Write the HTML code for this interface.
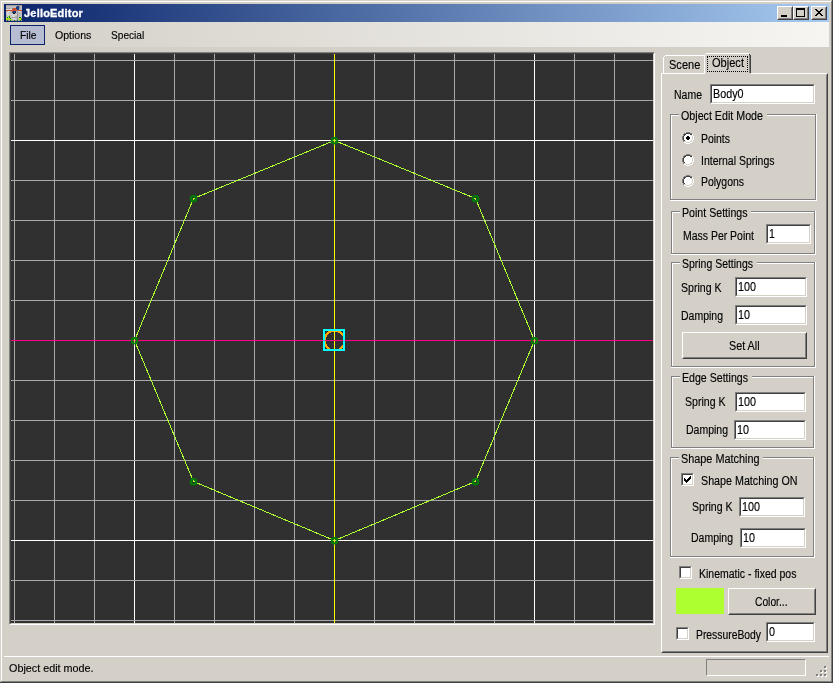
<!DOCTYPE html>
<html><head><meta charset="utf-8"><title>JelloEditor</title>
<style>
html,body{margin:0;padding:0}
body{width:833px;height:683px;position:relative;overflow:hidden;background:#D4D0C8;font-family:"Liberation Sans",sans-serif;color:#000}
body div,body span,body svg{position:absolute;box-sizing:content-box}
.ms{font-size:12px;line-height:13px;white-space:nowrap;transform-origin:0 0;filter:grayscale(1);-webkit-text-stroke:0.15px #000}
.th{font-size:11px;line-height:13px;white-space:nowrap;transform-origin:0 0;filter:grayscale(1);-webkit-text-stroke:0.15px #000}
.tb{border:1px solid;border-color:#808080 #fff #fff #808080;background:#fff}
.tb>div{left:0;top:0;right:0;bottom:0;border:1px solid;border-color:#404040 #D4D0C8 #D4D0C8 #404040}
.btn{border:1px solid;border-color:#fff #404040 #404040 #fff;background:#D4D0C8}
.btn>div{left:0;top:0;right:0;bottom:0;border:1px solid;border-color:#D4D0C8 #808080 #808080 #D4D0C8}
</style></head><body>

<div style="left:0px;top:0px;width:833px;height:683px;background:#D4D0C8"></div>
<div style="left:1px;top:1px;width:830px;height:1px;background:#fff"></div>
<div style="left:1px;top:1px;width:1px;height:680px;background:#fff"></div>
<div style="left:831px;top:0px;width:1px;height:683px;background:#808080"></div>
<div style="left:0px;top:681px;width:832px;height:1px;background:#808080"></div>
<div style="left:832px;top:0px;width:1px;height:683px;background:#404040"></div>
<div style="left:0px;top:682px;width:833px;height:1px;background:#404040"></div>
<div style="left:831px;top:0px;width:1px;height:1px;background:#D4D0C8"></div>
<div style="left:0px;top:681px;width:1px;height:1px;background:#D4D0C8"></div>
<div style="left:4px;top:4px;width:825px;height:18px;background:linear-gradient(to right,#0A246A,#A6CAF0)"></div>
<svg style="left:6px;top:5px" width="16" height="16" viewBox="0 0 16 16" shape-rendering="crispEdges"><rect width="16" height="16" fill="#BCBCBC"/><rect x="0" y="0" width="11" height="1" fill="#A0A0A0"/><rect x="11" y="0" width="1" height="1" fill="#909090"/><rect x="12" y="0" width="1" height="1" fill="#A0A0A0"/><rect x="13" y="0" width="2" height="1" fill="#909090"/><rect x="15" y="0" width="1" height="1" fill="#A0A0A0"/><rect x="10" y="1" width="1" height="1" fill="#909090"/><rect x="11" y="1" width="2" height="1" fill="#1C3C8C"/><rect x="13" y="1" width="1" height="1" fill="#909090"/><rect x="10" y="2" width="3" height="1" fill="#1C3C8C"/><rect x="13" y="2" width="1" height="1" fill="#909090"/><rect x="0" y="3" width="4" height="1" fill="#A0A0A0"/><rect x="6" y="3" width="1" height="1" fill="#909090"/><rect x="7" y="3" width="3" height="1" fill="#C8502C"/><rect x="10" y="3" width="3" height="1" fill="#1C3C8C"/><rect x="13" y="3" width="1" height="1" fill="#909090"/><rect x="0" y="4" width="6" height="1" fill="#DCDCDC"/><rect x="6" y="4" width="5" height="1" fill="#C8502C"/><rect x="11" y="4" width="2" height="1" fill="#1C3C8C"/><rect x="0" y="5" width="11" height="1" fill="#C8502C"/><rect x="11" y="5" width="1" height="1" fill="#909090"/><rect x="12" y="5" width="4" height="1" fill="#C8502C"/><rect x="2" y="6" width="2" height="1" fill="#DCDCDC"/><rect x="6" y="6" width="1" height="1" fill="#C8502C"/><rect x="7" y="6" width="3" height="1" fill="#1C3C8C"/><rect x="11" y="6" width="1" height="1" fill="#909090"/><rect x="12" y="6" width="2" height="1" fill="#DCDCDC"/><rect x="1" y="7" width="2" height="1" fill="#DCDCDC"/><rect x="6" y="7" width="3" height="1" fill="#1C3C8C"/><rect x="9" y="7" width="1" height="1" fill="#101010"/><rect x="11" y="7" width="1" height="1" fill="#909090"/><rect x="1" y="8" width="1" height="1" fill="#DCDCDC"/><rect x="3" y="8" width="1" height="1" fill="#DCDCDC"/><rect x="6" y="8" width="1" height="1" fill="#DCDCDC"/><rect x="7" y="8" width="2" height="1" fill="#101010"/><rect x="11" y="8" width="1" height="1" fill="#909090"/><rect x="13" y="8" width="1" height="1" fill="#A0A0A0"/><rect x="1" y="9" width="2" height="1" fill="#DCDCDC"/><rect x="4" y="9" width="2" height="1" fill="#DCDCDC"/><rect x="7" y="9" width="2" height="1" fill="#DCDCDC"/><rect x="10" y="9" width="1" height="1" fill="#DCDCDC"/><rect x="11" y="9" width="1" height="1" fill="#909090"/><rect x="2" y="10" width="1" height="1" fill="#DCDCDC"/><rect x="6" y="10" width="2" height="1" fill="#DCDCDC"/><rect x="9" y="10" width="1" height="1" fill="#DCDCDC"/><rect x="11" y="10" width="1" height="1" fill="#909090"/><rect x="2" y="11" width="1" height="1" fill="#A0F020"/><rect x="3" y="11" width="1" height="1" fill="#20A010"/><rect x="5" y="11" width="1" height="1" fill="#DCDCDC"/><rect x="7" y="11" width="2" height="1" fill="#DCDCDC"/><rect x="11" y="11" width="1" height="1" fill="#909090"/><rect x="1" y="12" width="1" height="1" fill="#108010"/><rect x="3" y="12" width="1" height="1" fill="#108010"/><rect x="6" y="12" width="5" height="1" fill="#A0A0A0"/><rect x="11" y="12" width="1" height="1" fill="#909090"/><rect x="13" y="12" width="2" height="1" fill="#108010"/><rect x="0" y="13" width="4" height="1" fill="#A0F020"/><rect x="4" y="13" width="1" height="1" fill="#108010"/><rect x="7" y="13" width="2" height="1" fill="#DCDCDC"/><rect x="11" y="13" width="1" height="1" fill="#909090"/><rect x="13" y="13" width="2" height="1" fill="#A0F020"/><rect x="15" y="13" width="1" height="1" fill="#C8502C"/><rect x="0" y="14" width="1" height="1" fill="#A0F020"/><rect x="1" y="14" width="1" height="1" fill="#F0A010"/><rect x="2" y="14" width="1" height="1" fill="#A0F020"/><rect x="3" y="14" width="1" height="1" fill="#F0A010"/><rect x="4" y="14" width="2" height="1" fill="#A0F020"/><rect x="7" y="14" width="1" height="1" fill="#DCDCDC"/><rect x="9" y="14" width="1" height="1" fill="#DCDCDC"/><rect x="11" y="14" width="1" height="1" fill="#909090"/><rect x="13" y="14" width="2" height="1" fill="#A0F020"/><rect x="15" y="14" width="1" height="1" fill="#20A010"/><rect x="0" y="15" width="1" height="1" fill="#A0A0A0"/><rect x="1" y="15" width="1" height="1" fill="#108010"/><rect x="2" y="15" width="2" height="1" fill="#A0A0A0"/><rect x="4" y="15" width="1" height="1" fill="#108010"/><rect x="5" y="15" width="3" height="1" fill="#A0A0A0"/><rect x="8" y="15" width="1" height="1" fill="#108010"/><rect x="9" y="15" width="2" height="1" fill="#A0A0A0"/><rect x="11" y="15" width="1" height="1" fill="#108010"/><rect x="12" y="15" width="2" height="1" fill="#A0A0A0"/><rect x="14" y="15" width="1" height="1" fill="#108010"/><rect x="15" y="15" width="1" height="1" fill="#A0A0A0"/></svg>
<span class="th" style="left:24px;top:7px;font-weight:bold;color:#fff;letter-spacing:0.2px;-webkit-text-stroke:0.3px #fff">JelloEditor</span>
<div class="btn" style="left:777px;top:6px;width:14px;height:12px"><div></div></div>
<svg style="left:777px;top:6px" width="16" height="14" viewBox="0 0 16 14" shape-rendering="crispEdges"><rect x="4" y="9" width="6" height="2" fill="#000"/></svg>
<div class="btn" style="left:793px;top:6px;width:14px;height:12px"><div></div></div>
<svg style="left:793px;top:6px" width="16" height="14" viewBox="0 0 16 14" shape-rendering="crispEdges"><rect x="3" y="2" width="8" height="8" fill="none" stroke="#000" stroke-width="1" transform="translate(0.5,0.5)"/><rect x="3" y="2" width="9" height="2" fill="#000"/></svg>
<div class="btn" style="left:811px;top:6px;width:14px;height:12px"><div></div></div>
<svg style="left:811px;top:6px" width="16" height="14" viewBox="0 0 16 14" shape-rendering="crispEdges"><path d="M4 3h2v1h1v1h2v-1h1v-1h2v1h-1v1h-1v1h-1v1h1v1h1v1h1v1h-2v-1h-1v-1h-2v1h-1v1h-2v-1h1v-1h1v-1h1v-1h-1v-1h-1v-1h-1z" fill="#000"/></svg>
<div style="left:4px;top:22px;width:825px;height:25px;background:linear-gradient(to right,#D4D0C8,#F6F5F2)"></div>
<div style="left:10px;top:25px;width:33px;height:18px;border:1px solid #0A246A;background:#B6BDD2"></div>
<span class="th" style="left:19.5px;top:29px;transform:scaleX(0.93)">File</span>
<span class="th" style="left:55px;top:29px;transform:scaleX(0.96)">Options</span>
<span class="th" style="left:111px;top:29px;transform:scaleX(0.92)">Special</span>
<div style="left:9px;top:52px;width:644px;height:571px;border:1px solid;border-color:#808080 #fff #fff #808080"></div>
<div style="left:10px;top:53px;width:642px;height:569px;border:1px solid;border-color:#404040 #D4D0C8 #D4D0C8 #404040;background:#303030"></div>
<svg style="left:11px;top:54px" width="642" height="569" viewBox="11 54 642 569">
<g shape-rendering="crispEdges">
<rect x="14" y="54" width="1" height="569" fill="#A9A9A9"/>
<rect x="54" y="54" width="1" height="569" fill="#A9A9A9"/>
<rect x="94" y="54" width="1" height="569" fill="#A9A9A9"/>
<rect x="134" y="54" width="1" height="569" fill="#fff"/>
<rect x="174" y="54" width="1" height="569" fill="#A9A9A9"/>
<rect x="214" y="54" width="1" height="569" fill="#A9A9A9"/>
<rect x="254" y="54" width="1" height="569" fill="#A9A9A9"/>
<rect x="294" y="54" width="1" height="569" fill="#A9A9A9"/>
<rect x="374" y="54" width="1" height="569" fill="#A9A9A9"/>
<rect x="414" y="54" width="1" height="569" fill="#A9A9A9"/>
<rect x="454" y="54" width="1" height="569" fill="#A9A9A9"/>
<rect x="494" y="54" width="1" height="569" fill="#A9A9A9"/>
<rect x="534" y="54" width="1" height="569" fill="#fff"/>
<rect x="574" y="54" width="1" height="569" fill="#A9A9A9"/>
<rect x="614" y="54" width="1" height="569" fill="#A9A9A9"/>
<rect x="11" y="60" width="642" height="1" fill="#A9A9A9"/>
<rect x="11" y="100" width="642" height="1" fill="#A9A9A9"/>
<rect x="11" y="140" width="642" height="1" fill="#fff"/>
<rect x="11" y="180" width="642" height="1" fill="#A9A9A9"/>
<rect x="11" y="220" width="642" height="1" fill="#A9A9A9"/>
<rect x="11" y="260" width="642" height="1" fill="#A9A9A9"/>
<rect x="11" y="300" width="642" height="1" fill="#A9A9A9"/>
<rect x="11" y="380" width="642" height="1" fill="#A9A9A9"/>
<rect x="11" y="420" width="642" height="1" fill="#A9A9A9"/>
<rect x="11" y="460" width="642" height="1" fill="#A9A9A9"/>
<rect x="11" y="500" width="642" height="1" fill="#A9A9A9"/>
<rect x="11" y="540" width="642" height="1" fill="#fff"/>
<rect x="11" y="580" width="642" height="1" fill="#A9A9A9"/>
<rect x="11" y="620" width="642" height="1" fill="#A9A9A9"/>
<rect x="334" y="54" width="1" height="569" fill="#FFFF00"/>
<rect x="11" y="340" width="642" height="1" fill="#FF0084"/>
<polygon points="334.5,140.5 475.5,198.5 534.5,340.5 475.5,481.5 334.5,540.5 193.5,481.5 134.5,340.5 193.5,198.5" fill="none" stroke="#ADFF2F" stroke-width="1"/>
</g>
<circle cx="334.5" cy="140.8" r="2.75" fill="none" stroke="#008000" stroke-width="2"/>
<circle cx="475.5" cy="198.8" r="2.75" fill="none" stroke="#008000" stroke-width="2"/>
<circle cx="534.5" cy="340.8" r="2.75" fill="none" stroke="#008000" stroke-width="2"/>
<circle cx="475.5" cy="481.8" r="2.75" fill="none" stroke="#008000" stroke-width="2"/>
<circle cx="334.5" cy="540.8" r="2.75" fill="none" stroke="#008000" stroke-width="2"/>
<circle cx="193.5" cy="481.8" r="2.75" fill="none" stroke="#008000" stroke-width="2"/>
<circle cx="134.5" cy="340.8" r="2.75" fill="none" stroke="#008000" stroke-width="2"/>
<circle cx="193.5" cy="198.8" r="2.75" fill="none" stroke="#008000" stroke-width="2"/>
<g shape-rendering="crispEdges"><clipPath id="mk"><rect x="325" y="331" width="18" height="18"/></clipPath><circle cx="334.6" cy="340.6" r="10" fill="none" stroke="#FFA500" stroke-width="2" clip-path="url(#mk)"/>
<rect x="334" y="325" width="1" height="30" fill="#FFFF00"/><rect x="318" y="340" width="34" height="1" fill="#FF0084"/>
<rect x="324" y="330" width="20" height="20" fill="none" stroke="#00FFFF" stroke-width="2"/>
<rect x="323" y="340" width="2" height="1" fill="#8080C0"/><rect x="343" y="340" width="2" height="1" fill="#8080C0"/></g>
</svg>
<div style="left:661px;top:73px;width:165px;height:578px;border:1px solid;border-color:#fff #404040 #404040 #fff"></div>
<div style="left:662px;top:74px;width:163px;height:576px;border:1px solid;border-color:#D4D0C8 #808080 #808080 #D4D0C8"></div>
<div style="left:663px;top:57px;width:1px;height:16px;background:#fff"></div>
<div style="left:664px;top:56px;width:1px;height:1px;background:#fff"></div>
<div style="left:665px;top:55px;width:39px;height:1px;background:#fff"></div>
<span class="ms" style="left:669.3px;top:59px;transform:scaleX(0.92);">Scene</span>
<div style="left:704px;top:53px;width:47px;height:21px;background:#D4D0C8"></div>
<div style="left:704px;top:55px;width:1px;height:19px;background:#fff"></div>
<div style="left:705px;top:54px;width:1px;height:1px;background:#fff"></div>
<div style="left:706px;top:53px;width:43px;height:1px;background:#fff"></div>
<div style="left:749px;top:55px;width:1px;height:18px;background:#808080"></div>
<div style="left:750px;top:55px;width:1px;height:18px;background:#404040"></div>
<div style="left:749px;top:54px;width:1px;height:1px;background:#404040"></div>
<div style="left:707px;top:56px;width:39px;height:14px;border:1px dotted #000"></div>
<span class="ms" style="left:712.3px;top:57px;transform:scaleX(0.922);">Object</span>
<span class="ms" style="left:674.3px;top:89px;transform:scaleX(0.874);">Name</span>
<div class="tb" style="left:710px;top:84px;width:103px;height:18px"><div></div></div>
<span class="ms" style="left:713.3px;top:88px;transform:scaleX(0.896);">Body0</span>
<div style="left:671px;top:115px;width:144px;height:84px;border:1px solid #fff"></div>
<div style="left:670px;top:114px;width:144px;height:84px;border:1px solid #808080"></div>
<div style="left:670px;top:200px;width:1px;height:1px;background:#fff"></div><div style="left:816px;top:114px;width:1px;height:1px;background:#fff"></div>
<div style="left:679px;top:114px;width:88px;height:2px;background:#D4D0C8"></div>
<span class="ms" style="left:681.3px;top:110px;transform:scaleX(0.891);">Object Edit Mode</span>
<svg style="left:682px;top:132px" width="12" height="12" viewBox="0 0 12 12" shape-rendering="crispEdges"><rect x="4" y="0" width="4" height="1" fill="#808080"/><rect x="2" y="1" width="2" height="1" fill="#808080"/><rect x="4" y="1" width="4" height="1" fill="#404040"/><rect x="8" y="1" width="2" height="1" fill="#808080"/><rect x="1" y="2" width="1" height="1" fill="#808080"/><rect x="2" y="2" width="2" height="1" fill="#404040"/><rect x="4" y="2" width="4" height="1" fill="#fff"/><rect x="8" y="2" width="2" height="1" fill="#404040"/><rect x="10" y="2" width="1" height="1" fill="#fff"/><rect x="1" y="3" width="1" height="1" fill="#808080"/><rect x="2" y="3" width="1" height="1" fill="#404040"/><rect x="3" y="3" width="6" height="1" fill="#fff"/><rect x="10" y="3" width="1" height="1" fill="#fff"/><rect x="0" y="4" width="1" height="1" fill="#808080"/><rect x="1" y="4" width="1" height="1" fill="#404040"/><rect x="2" y="4" width="8" height="1" fill="#fff"/><rect x="11" y="4" width="1" height="1" fill="#fff"/><rect x="0" y="5" width="1" height="1" fill="#808080"/><rect x="1" y="5" width="1" height="1" fill="#404040"/><rect x="2" y="5" width="8" height="1" fill="#fff"/><rect x="11" y="5" width="1" height="1" fill="#fff"/><rect x="0" y="6" width="1" height="1" fill="#808080"/><rect x="1" y="6" width="1" height="1" fill="#404040"/><rect x="2" y="6" width="8" height="1" fill="#fff"/><rect x="11" y="6" width="1" height="1" fill="#fff"/><rect x="0" y="7" width="1" height="1" fill="#808080"/><rect x="1" y="7" width="1" height="1" fill="#404040"/><rect x="2" y="7" width="8" height="1" fill="#fff"/><rect x="11" y="7" width="1" height="1" fill="#fff"/><rect x="1" y="8" width="1" height="1" fill="#808080"/><rect x="2" y="8" width="1" height="1" fill="#404040"/><rect x="3" y="8" width="6" height="1" fill="#fff"/><rect x="10" y="8" width="1" height="1" fill="#fff"/><rect x="1" y="9" width="1" height="1" fill="#808080"/><rect x="4" y="9" width="4" height="1" fill="#fff"/><rect x="10" y="9" width="1" height="1" fill="#fff"/><rect x="2" y="10" width="2" height="1" fill="#fff"/><rect x="8" y="10" width="2" height="1" fill="#fff"/><rect x="4" y="11" width="4" height="1" fill="#fff"/><rect x="5" y="4" width="2" height="4" fill="#000"/><rect x="4" y="5" width="4" height="2" fill="#000"/></svg>
<span class="ms" style="left:701.3px;top:133px;transform:scaleX(0.869);">Points</span>
<svg style="left:682px;top:154px" width="12" height="12" viewBox="0 0 12 12" shape-rendering="crispEdges"><rect x="4" y="0" width="4" height="1" fill="#808080"/><rect x="2" y="1" width="2" height="1" fill="#808080"/><rect x="4" y="1" width="4" height="1" fill="#404040"/><rect x="8" y="1" width="2" height="1" fill="#808080"/><rect x="1" y="2" width="1" height="1" fill="#808080"/><rect x="2" y="2" width="2" height="1" fill="#404040"/><rect x="4" y="2" width="4" height="1" fill="#fff"/><rect x="8" y="2" width="2" height="1" fill="#404040"/><rect x="10" y="2" width="1" height="1" fill="#fff"/><rect x="1" y="3" width="1" height="1" fill="#808080"/><rect x="2" y="3" width="1" height="1" fill="#404040"/><rect x="3" y="3" width="6" height="1" fill="#fff"/><rect x="10" y="3" width="1" height="1" fill="#fff"/><rect x="0" y="4" width="1" height="1" fill="#808080"/><rect x="1" y="4" width="1" height="1" fill="#404040"/><rect x="2" y="4" width="8" height="1" fill="#fff"/><rect x="11" y="4" width="1" height="1" fill="#fff"/><rect x="0" y="5" width="1" height="1" fill="#808080"/><rect x="1" y="5" width="1" height="1" fill="#404040"/><rect x="2" y="5" width="8" height="1" fill="#fff"/><rect x="11" y="5" width="1" height="1" fill="#fff"/><rect x="0" y="6" width="1" height="1" fill="#808080"/><rect x="1" y="6" width="1" height="1" fill="#404040"/><rect x="2" y="6" width="8" height="1" fill="#fff"/><rect x="11" y="6" width="1" height="1" fill="#fff"/><rect x="0" y="7" width="1" height="1" fill="#808080"/><rect x="1" y="7" width="1" height="1" fill="#404040"/><rect x="2" y="7" width="8" height="1" fill="#fff"/><rect x="11" y="7" width="1" height="1" fill="#fff"/><rect x="1" y="8" width="1" height="1" fill="#808080"/><rect x="2" y="8" width="1" height="1" fill="#404040"/><rect x="3" y="8" width="6" height="1" fill="#fff"/><rect x="10" y="8" width="1" height="1" fill="#fff"/><rect x="1" y="9" width="1" height="1" fill="#808080"/><rect x="4" y="9" width="4" height="1" fill="#fff"/><rect x="10" y="9" width="1" height="1" fill="#fff"/><rect x="2" y="10" width="2" height="1" fill="#fff"/><rect x="8" y="10" width="2" height="1" fill="#fff"/><rect x="4" y="11" width="4" height="1" fill="#fff"/></svg>
<span class="ms" style="left:701.3px;top:155px;transform:scaleX(0.874);">Internal Springs</span>
<svg style="left:682px;top:175px" width="12" height="12" viewBox="0 0 12 12" shape-rendering="crispEdges"><rect x="4" y="0" width="4" height="1" fill="#808080"/><rect x="2" y="1" width="2" height="1" fill="#808080"/><rect x="4" y="1" width="4" height="1" fill="#404040"/><rect x="8" y="1" width="2" height="1" fill="#808080"/><rect x="1" y="2" width="1" height="1" fill="#808080"/><rect x="2" y="2" width="2" height="1" fill="#404040"/><rect x="4" y="2" width="4" height="1" fill="#fff"/><rect x="8" y="2" width="2" height="1" fill="#404040"/><rect x="10" y="2" width="1" height="1" fill="#fff"/><rect x="1" y="3" width="1" height="1" fill="#808080"/><rect x="2" y="3" width="1" height="1" fill="#404040"/><rect x="3" y="3" width="6" height="1" fill="#fff"/><rect x="10" y="3" width="1" height="1" fill="#fff"/><rect x="0" y="4" width="1" height="1" fill="#808080"/><rect x="1" y="4" width="1" height="1" fill="#404040"/><rect x="2" y="4" width="8" height="1" fill="#fff"/><rect x="11" y="4" width="1" height="1" fill="#fff"/><rect x="0" y="5" width="1" height="1" fill="#808080"/><rect x="1" y="5" width="1" height="1" fill="#404040"/><rect x="2" y="5" width="8" height="1" fill="#fff"/><rect x="11" y="5" width="1" height="1" fill="#fff"/><rect x="0" y="6" width="1" height="1" fill="#808080"/><rect x="1" y="6" width="1" height="1" fill="#404040"/><rect x="2" y="6" width="8" height="1" fill="#fff"/><rect x="11" y="6" width="1" height="1" fill="#fff"/><rect x="0" y="7" width="1" height="1" fill="#808080"/><rect x="1" y="7" width="1" height="1" fill="#404040"/><rect x="2" y="7" width="8" height="1" fill="#fff"/><rect x="11" y="7" width="1" height="1" fill="#fff"/><rect x="1" y="8" width="1" height="1" fill="#808080"/><rect x="2" y="8" width="1" height="1" fill="#404040"/><rect x="3" y="8" width="6" height="1" fill="#fff"/><rect x="10" y="8" width="1" height="1" fill="#fff"/><rect x="1" y="9" width="1" height="1" fill="#808080"/><rect x="4" y="9" width="4" height="1" fill="#fff"/><rect x="10" y="9" width="1" height="1" fill="#fff"/><rect x="2" y="10" width="2" height="1" fill="#fff"/><rect x="8" y="10" width="2" height="1" fill="#fff"/><rect x="4" y="11" width="4" height="1" fill="#fff"/></svg>
<span class="ms" style="left:701.3px;top:176px;transform:scaleX(0.871);">Polygons</span>
<div style="left:672px;top:212px;width:142px;height:41px;border:1px solid #fff"></div>
<div style="left:671px;top:211px;width:142px;height:41px;border:1px solid #808080"></div>
<div style="left:671px;top:254px;width:1px;height:1px;background:#fff"></div><div style="left:815px;top:211px;width:1px;height:1px;background:#fff"></div>
<div style="left:680px;top:211px;width:71px;height:2px;background:#D4D0C8"></div>
<span class="ms" style="left:682.3px;top:207px;transform:scaleX(0.885);">Point Settings</span>
<span class="ms" style="left:683.3px;top:230px;transform:scaleX(0.872);">Mass Per Point</span>
<div class="tb" style="left:766px;top:224px;width:43px;height:18px"><div></div></div>
<span class="ms" style="left:769.3px;top:228px;transform:scaleX(0.88);">1</span>
<div style="left:672px;top:263px;width:142px;height:103px;border:1px solid #fff"></div>
<div style="left:671px;top:262px;width:142px;height:103px;border:1px solid #808080"></div>
<div style="left:671px;top:367px;width:1px;height:1px;background:#fff"></div><div style="left:815px;top:262px;width:1px;height:1px;background:#fff"></div>
<div style="left:680px;top:262px;width:77px;height:2px;background:#D4D0C8"></div>
<span class="ms" style="left:682.3px;top:258px;transform:scaleX(0.872);">Spring Settings</span>
<span class="ms" style="left:681.3px;top:282px;transform:scaleX(0.88);">Spring K</span>
<div class="tb" style="left:735px;top:277px;width:70px;height:18px"><div></div></div>
<span class="ms" style="left:738.3px;top:281px;transform:scaleX(0.899);">100</span>
<span class="ms" style="left:681.3px;top:310px;transform:scaleX(0.874);">Damping</span>
<div class="tb" style="left:735px;top:305px;width:70px;height:18px"><div></div></div>
<span class="ms" style="left:738.3px;top:309px;transform:scaleX(0.898);">10</span>
<div class="btn" style="left:682px;top:332px;width:123px;height:25px"><div></div></div>
<span class="ms" style="left:729.0px;top:340px;transform:scaleX(0.899);">Set All</span>
<div style="left:672px;top:377px;width:141px;height:70px;border:1px solid #fff"></div>
<div style="left:671px;top:376px;width:141px;height:70px;border:1px solid #808080"></div>
<div style="left:671px;top:448px;width:1px;height:1px;background:#fff"></div><div style="left:814px;top:376px;width:1px;height:1px;background:#fff"></div>
<div style="left:680px;top:376px;width:72px;height:2px;background:#D4D0C8"></div>
<span class="ms" style="left:682.3px;top:372px;transform:scaleX(0.883);">Edge Settings</span>
<span class="ms" style="left:685.3px;top:396px;transform:scaleX(0.88);">Spring K</span>
<div class="tb" style="left:735px;top:392px;width:69px;height:18px"><div></div></div>
<span class="ms" style="left:738.3px;top:396px;transform:scaleX(0.899);">100</span>
<span class="ms" style="left:686.3px;top:424px;transform:scaleX(0.874);">Damping</span>
<div class="tb" style="left:734px;top:420px;width:70px;height:18px"><div></div></div>
<span class="ms" style="left:737.3px;top:424px;transform:scaleX(0.898);">10</span>
<div style="left:671px;top:458px;width:142px;height:98px;border:1px solid #fff"></div>
<div style="left:670px;top:457px;width:142px;height:98px;border:1px solid #808080"></div>
<div style="left:670px;top:557px;width:1px;height:1px;background:#fff"></div><div style="left:814px;top:457px;width:1px;height:1px;background:#fff"></div>
<div style="left:679px;top:457px;width:84px;height:2px;background:#D4D0C8"></div>
<span class="ms" style="left:681.3px;top:453px;transform:scaleX(0.905);">Shape Matching</span>
<div class="tb" style="left:681px;top:473px;width:11px;height:11px"><div></div></div>
<svg style="left:684px;top:476px" width="7" height="7" viewBox="0 0 7 7" shape-rendering="crispEdges"><path d="M0 2v3M1 3v3M2 4v3M3 3v3M4 2v3M5 1v3M6 0v3" stroke="#000" stroke-width="1" transform="translate(0.5,0)"/></svg>
<span class="ms" style="left:701.3px;top:475px;transform:scaleX(0.893);">Shape Matching ON</span>
<span class="ms" style="left:692.3px;top:501px;transform:scaleX(0.88);">Spring K</span>
<div class="tb" style="left:739px;top:497px;width:64px;height:18px"><div></div></div>
<span class="ms" style="left:742.3px;top:501px;transform:scaleX(0.899);">100</span>
<span class="ms" style="left:691.3px;top:532px;transform:scaleX(0.874);">Damping</span>
<div class="tb" style="left:740px;top:528px;width:64px;height:18px"><div></div></div>
<span class="ms" style="left:743.3px;top:532px;transform:scaleX(0.898);">10</span>
<div class="tb" style="left:679px;top:566px;width:11px;height:11px"><div></div></div>
<span class="ms" style="left:699.3px;top:568px;transform:scaleX(0.875);">Kinematic - fixed pos</span>
<div style="left:676px;top:588px;width:48px;height:26px;background:#ADFF2F"></div>
<div class="btn" style="left:728px;top:588px;width:86px;height:25px"><div></div></div>
<span class="ms" style="left:755.3px;top:596px;transform:scaleX(0.855);">Color...</span>
<div class="tb" style="left:676px;top:627px;width:11px;height:11px"><div></div></div>
<span class="ms" style="left:696.3px;top:629px;transform:scaleX(0.862);">PressureBody</span>
<div class="tb" style="left:766px;top:622px;width:47px;height:18px"><div></div></div>
<span class="ms" style="left:769.3px;top:626px;transform:scaleX(0.897);">0</span>
<div style="left:4px;top:656px;width:825px;height:1px;background:#fff"></div>
<span class="th" style="left:9px;top:662px;transform:scaleX(0.98)">Object edit mode.</span>
<div style="left:706px;top:659px;width:98px;height:15px;border:1px solid;border-color:#808080 #fff #fff #808080"></div>
<svg style="left:815px;top:665px" width="13" height="13" viewBox="0 0 13 13" shape-rendering="crispEdges"><rect x="10" y="2" width="2" height="2" fill="#fff"/><rect x="9" y="1" width="2" height="2" fill="#808080"/><rect x="6" y="6" width="2" height="2" fill="#fff"/><rect x="5" y="5" width="2" height="2" fill="#808080"/><rect x="10" y="6" width="2" height="2" fill="#fff"/><rect x="9" y="5" width="2" height="2" fill="#808080"/><rect x="2" y="10" width="2" height="2" fill="#fff"/><rect x="1" y="9" width="2" height="2" fill="#808080"/><rect x="6" y="10" width="2" height="2" fill="#fff"/><rect x="5" y="9" width="2" height="2" fill="#808080"/><rect x="10" y="10" width="2" height="2" fill="#fff"/><rect x="9" y="9" width="2" height="2" fill="#808080"/></svg>
</body></html>
